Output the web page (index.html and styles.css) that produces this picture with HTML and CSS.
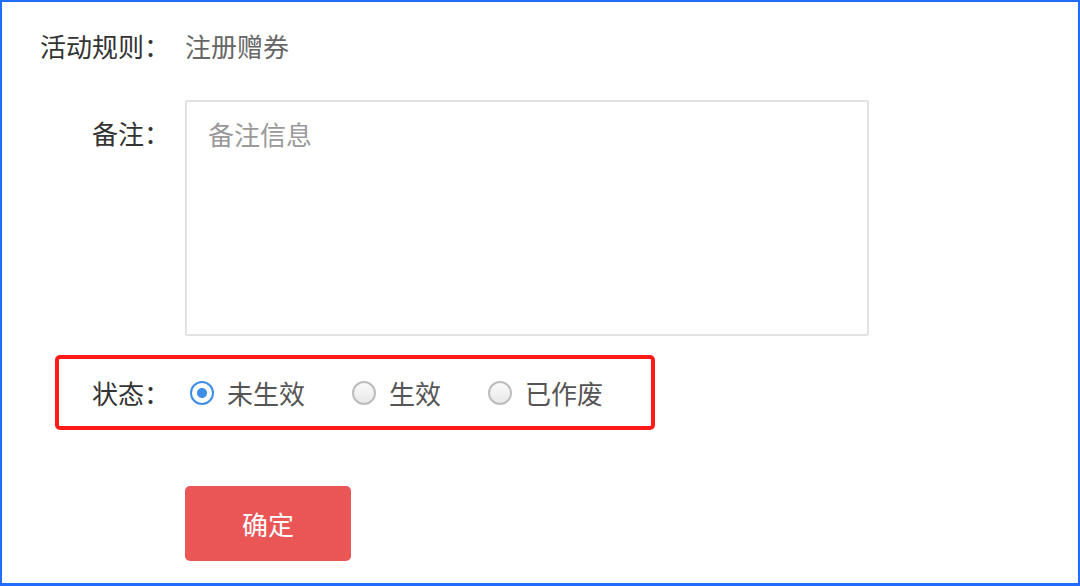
FILE: index.html
```html
<!DOCTYPE html>
<html lang="zh-CN">
<head>
<meta charset="utf-8">
<title>表单</title>
<link rel="stylesheet" href="styles.css">
</head>
<body>
<div class="frame">
  <div class="form">
    <div class="row row-rule">
      <div class="label">活动规则：</div>
      <div class="value">注册赠券</div>
    </div>
    <div class="row row-note">
      <div class="label label-top">备注：</div>
      <textarea class="note" placeholder="备注信息"></textarea>
    </div>
    <div class="status-box">
      <div class="label label-status">状态：</div>
      <div class="radios">
        <label class="radio"><span class="dot dot-on"></span><span class="radio-text">未生效</span></label>
        <label class="radio"><span class="dot"></span><span class="radio-text">生效</span></label>
        <label class="radio"><span class="dot"></span><span class="radio-text">已作废</span></label>
      </div>
    </div>
    <button class="submit" type="button">确定</button>
  </div>
</div>
</body>
</html>
```
FILE: styles.css
```css
html, body {
  margin: 0;
  padding: 0;
  background: #fff;
}
body {
  font-family: "Noto Sans CJK SC", "Liberation Sans", sans-serif;
}
.frame {
  width: 1080px;
  height: 586px;
  box-sizing: border-box;
  border: 2px solid #1f6cff;
  border-bottom-width: 3px;
  padding: 24px 0 0 38px;
}
.form {
  display: flex;
  flex-direction: column;
  align-items: flex-start;
}
.row {
  display: flex;
  align-items: flex-start;
  gap: 15px;
}
.label {
  width: 130px;
  text-align: right;
  font-size: 26px;
  line-height: 40px;
  color: #333;
  white-space: nowrap;
}
.value {
  font-size: 26px;
  line-height: 40px;
  color: #666;
}
.row-note {
  margin-top: 34px;
}
.label-top {
  padding-top: 13px;
}
.note {
  display: block;
  width: 684px;
  height: 236px;
  box-sizing: border-box;
  margin: 0;
  border: 2px solid #e2e2e2;
  border-radius: 2px;
  padding: 12px 21px;
  font-family: "Noto Sans CJK SC", "Liberation Sans", sans-serif;
  font-size: 26px;
  line-height: 40px;
  color: #333;
  resize: none;
  outline: none;
}
.note::placeholder {
  color: #9a9a9a;
}
.status-box {
  margin-top: 19px;
  margin-left: 15px;
  width: 600px;
  height: 75px;
  box-sizing: border-box;
  border: 4px solid #ff1a1a;
  border-radius: 5px;
  display: flex;
  align-items: center;
  gap: 15px;
}
.label-status {
  width: 111px;
}
.radios {
  display: flex;
  align-items: center;
  gap: 47px;
  padding-left: 5px;
}
.radio {
  display: flex;
  align-items: center;
  gap: 13px;
  font-size: 26px;
  line-height: 40px;
  color: #555;
}
.dot {
  width: 24px;
  height: 24px;
  box-sizing: border-box;
  border-radius: 50%;
  border: 2px solid #bdbdbd;
  background: linear-gradient(#fafafa, #e8e8e8);
}
.dot-on {
  border-color: #3c8ee6;
  background: radial-gradient(circle, #3c8ee6 0 4.5px, #fff 5.5px);
}
.submit {
  margin-top: 56px;
  margin-left: 145px;
  width: 166px;
  height: 75px;
  border: none;
  border-radius: 5px;
  background: #ea5556;
  color: #fff;
  font-family: "Noto Sans CJK SC", "Liberation Sans", sans-serif;
  font-size: 26px;
  padding: 0;
}
```
